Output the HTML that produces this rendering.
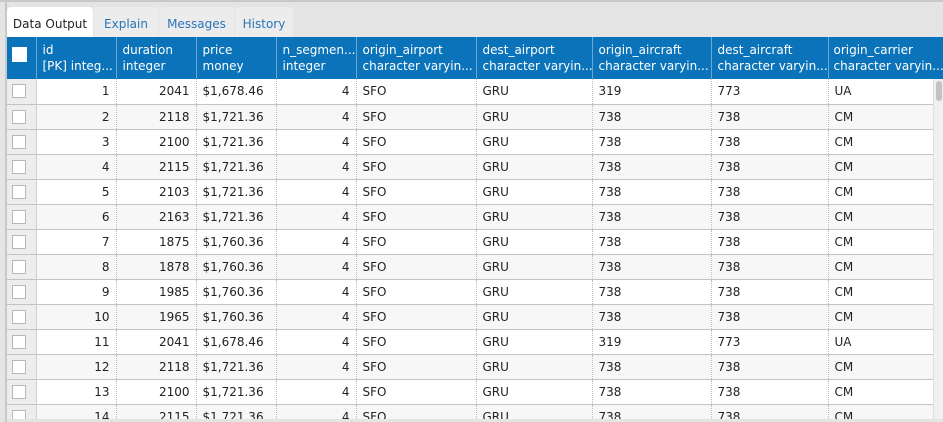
<!DOCTYPE html>
<html><head><meta charset="utf-8">
<style>
*{box-sizing:border-box;margin:0;padding:0}
body{width:943px;height:422px;overflow:hidden;background:#e4e4e4;font-family:"DejaVu Sans","Liberation Sans",sans-serif;font-size:12px;color:#222;position:relative}
.topline{position:absolute;left:0;top:0;width:943px;height:2px;background:#c8c8c8}
.leftline{position:absolute;left:5px;top:2px;width:2px;height:420px;background:#c8c8c8}
.tabs{position:absolute;left:7px;top:7px;height:30px}
.tab{position:absolute;top:0;height:30px;padding-top:10px;text-align:center;color:#2a75b8;background:#ececec;border-radius:4px 4px 0 0}
.tab.active{background:#fff;color:#222}
.grid{position:absolute;left:7px;top:37px;width:936px;height:383px;background:#fff;overflow:hidden}
table{border-collapse:collapse;table-layout:fixed;width:936px}
th{background:#0a73ba;color:#fff;font-weight:normal;text-align:left;vertical-align:top;padding:5px 6px 0;height:42px;line-height:16px;border-right:1px solid #6ea6d2;white-space:nowrap;overflow:hidden}
td{height:25px;padding:0 6px;border-bottom:1px solid #c4c4c4;border-right:1px dotted #bbb;white-space:nowrap;overflow:hidden}
tr:nth-child(odd) td{background:#f7f7f7}
td.n{text-align:right}
td.cb{background:#ededed!important;border-right:1px solid #d0d0d0;padding:0 0 0 5px}
.box{width:14px;height:14px;border:1px solid #b8b8b8;background:#fff}
th .box{width:15px;height:15px;border:1px solid #fff;margin-top:5px;margin-left:1px}
.sb{position:absolute;left:933px;top:79px;width:10px;height:343px;background:#f0f0f0;border-left:1px solid #e0e0e0}
.thumb{position:absolute;left:936px;top:81px;width:6px;height:20px;background:#c2c2c2;border-radius:3px}
.bottom{position:absolute;left:7px;top:419px;width:936px;height:3px;background:#e4e4e4}
</style></head><body>
<div class="topline"></div>
<div class="leftline"></div>
<div class="tabs">
<div class="tab active" style="left:0;width:86px">Data Output</div>
<div class="tab" style="left:87px;width:64px">Explain</div>
<div class="tab" style="left:152px;width:75px">Messages</div>
<div class="tab" style="left:228px;width:58px">History</div>
</div>
<div class="grid">
<table>
<colgroup><col style="width:29px"><col style="width:80px"><col style="width:80px"><col style="width:80px"><col style="width:80px"><col style="width:120px"><col style="width:116px"><col style="width:119px"><col style="width:117px"><col style="width:115px"></colgroup>
<tr><th style="padding-left:4px"><div class="box"></div></th><th>id<br>[PK] integ...</th><th>duration<br>integer</th><th>price<br>money</th><th>n_segmen...<br>integer</th><th>origin_airport<br>character varyin...</th><th>dest_airport<br>character varyin...</th><th>origin_aircraft<br>character varyin...</th><th>dest_aircraft<br>character varyin...</th><th style="padding-left:5px;padding-right:0">origin_carrier<br>character varyin...</th></tr>
<tr><td class="cb"><div class="box"></div></td><td class="n">1</td><td class="n">2041</td><td>$1,678.46</td><td class="n">4</td><td>SFO</td><td>GRU</td><td>319</td><td>773</td><td>UA</td></tr>
<tr><td class="cb"><div class="box"></div></td><td class="n">2</td><td class="n">2118</td><td>$1,721.36</td><td class="n">4</td><td>SFO</td><td>GRU</td><td>738</td><td>738</td><td>CM</td></tr>
<tr><td class="cb"><div class="box"></div></td><td class="n">3</td><td class="n">2100</td><td>$1,721.36</td><td class="n">4</td><td>SFO</td><td>GRU</td><td>738</td><td>738</td><td>CM</td></tr>
<tr><td class="cb"><div class="box"></div></td><td class="n">4</td><td class="n">2115</td><td>$1,721.36</td><td class="n">4</td><td>SFO</td><td>GRU</td><td>738</td><td>738</td><td>CM</td></tr>
<tr><td class="cb"><div class="box"></div></td><td class="n">5</td><td class="n">2103</td><td>$1,721.36</td><td class="n">4</td><td>SFO</td><td>GRU</td><td>738</td><td>738</td><td>CM</td></tr>
<tr><td class="cb"><div class="box"></div></td><td class="n">6</td><td class="n">2163</td><td>$1,721.36</td><td class="n">4</td><td>SFO</td><td>GRU</td><td>738</td><td>738</td><td>CM</td></tr>
<tr><td class="cb"><div class="box"></div></td><td class="n">7</td><td class="n">1875</td><td>$1,760.36</td><td class="n">4</td><td>SFO</td><td>GRU</td><td>738</td><td>738</td><td>CM</td></tr>
<tr><td class="cb"><div class="box"></div></td><td class="n">8</td><td class="n">1878</td><td>$1,760.36</td><td class="n">4</td><td>SFO</td><td>GRU</td><td>738</td><td>738</td><td>CM</td></tr>
<tr><td class="cb"><div class="box"></div></td><td class="n">9</td><td class="n">1985</td><td>$1,760.36</td><td class="n">4</td><td>SFO</td><td>GRU</td><td>738</td><td>738</td><td>CM</td></tr>
<tr><td class="cb"><div class="box"></div></td><td class="n">10</td><td class="n">1965</td><td>$1,760.36</td><td class="n">4</td><td>SFO</td><td>GRU</td><td>738</td><td>738</td><td>CM</td></tr>
<tr><td class="cb"><div class="box"></div></td><td class="n">11</td><td class="n">2041</td><td>$1,678.46</td><td class="n">4</td><td>SFO</td><td>GRU</td><td>319</td><td>773</td><td>UA</td></tr>
<tr><td class="cb"><div class="box"></div></td><td class="n">12</td><td class="n">2118</td><td>$1,721.36</td><td class="n">4</td><td>SFO</td><td>GRU</td><td>738</td><td>738</td><td>CM</td></tr>
<tr><td class="cb"><div class="box"></div></td><td class="n">13</td><td class="n">2100</td><td>$1,721.36</td><td class="n">4</td><td>SFO</td><td>GRU</td><td>738</td><td>738</td><td>CM</td></tr>
<tr><td class="cb"><div class="box"></div></td><td class="n">14</td><td class="n">2115</td><td>$1,721.36</td><td class="n">4</td><td>SFO</td><td>GRU</td><td>738</td><td>738</td><td>CM</td></tr>
</table>
</div>
<div class="sb"></div><div class="thumb"></div>
<div class="bottom"></div>
</body></html>
